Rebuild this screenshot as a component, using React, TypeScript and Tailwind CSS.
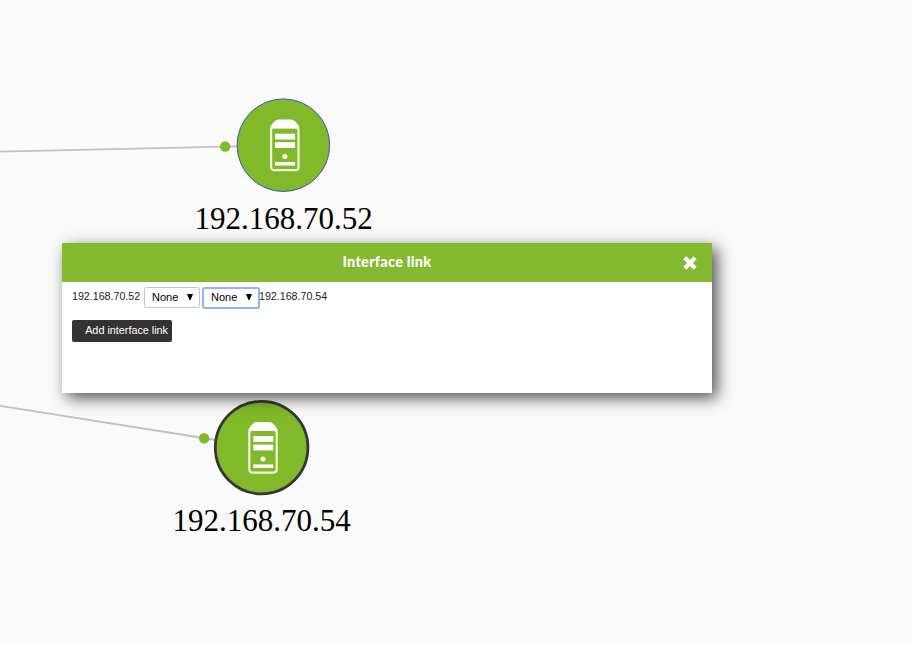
type NodeProps = { cx: number; cy: number; selected?: boolean; label: string; labelX: number };

function ServerNode({ cx, cy, selected, label, labelX }: NodeProps) {
  return (
    <g>
      <circle
        cx={cx}
        cy={cy}
        r={46.3}
        fill="#82b92a"
        stroke={selected ? '#363636' : '#3f52c0'}
        strokeWidth={selected ? 2.8 : 1}
      />
      <g transform={`translate(${cx + 1.4} ${cy})`} fill="#fff">
        <rect x={-13.7} y={-18} width={27.4} height={43} rx={3} fill="none" stroke="#eff6e2" strokeWidth={2.2} />
        <path d="M-14.6 -16.8 C-14.6 -20 -9.5 -25.7 -6.5 -25.7 H6.5 C9.5 -25.7 14.6 -20 14.6 -16.8 Z" />
        <rect x={-9.7} y={-11.5} width={20} height={5.8} />
        <rect x={-9.7} y={-3} width={20} height={5.8} />
        <circle cx={0} cy={11.3} r={2.5} />
        <rect x={-9.7} y={16.8} width={20} height={3.6} />
      </g>
      <text x={labelX} y={cy + 83.6} textAnchor="middle" className="fill-black font-['Liberation_Serif',serif] text-[31px]">
        {label}
      </text>
    </g>
  );
}

function InterfaceSelect({ focused }: { focused?: boolean }) {
  return (
    <button
      className={
        focused
          ? 'ml-[2px] flex h-[22px] w-[58px] items-center justify-between rounded-[3px] border-2 border-[#8fb4f4] bg-white pr-[6px] pl-[7px] text-[11px] text-black'
          : 'ml-[3px] flex h-[21px] w-[56px] items-center justify-between rounded-[3px] border border-[#c4c4c4] bg-white pr-[6px] pl-[7px] text-[11px] text-black'
      }
    >
      <span>None</span>
      <svg width="6" height="7" viewBox="0 0 6 7">
        <path d="M0 0H6L3.5 6H2.5Z" />
      </svg>
    </button>
  );
}

export default function App() {
  return (
    <main className="relative h-[645px] w-[912px] overflow-hidden bg-[#fafafa] font-['Liberation_Sans',sans-serif]">
      <svg className="block" width="912" height="645">
        <g stroke="#c0c0c0" strokeWidth="1.8">
          <line x1="0" y1="151.6" x2="237" y2="146.3" />
          <line x1="0" y1="405.8" x2="216" y2="440" />
        </g>
        <circle cx="225.2" cy="146.5" r="5.2" fill="#82b92a" />
        <circle cx="204.1" cy="438.2" r="5.2" fill="#82b92a" />
        <ServerNode cx={283.4} cy={145.2} label="192.168.70.52" labelX={283.5} />
        <ServerNode cx={261.6} cy={447.6} label="192.168.70.54" labelX={261.7} selected />
      </svg>

      <section className="absolute top-[243px] left-[62px] h-[150px] w-[650px] bg-white shadow-[5px_5px_15px_rgba(0,0,0,0.68)]">
        <header className="relative flex h-[39px] items-center justify-center bg-[#84b930] pb-[2px]">
          <h1 className="font-['Lato',sans-serif] text-[14.5px] font-black tracking-[0.25px] whitespace-nowrap text-white">Interface link</h1>
          <button className="absolute top-[13px] right-[15px]" aria-label="Close">
            <svg className="block" width="14" height="14" viewBox="0 0 14 14" stroke="white" strokeWidth="4.2">
              <path d="M1.8 1.8 L12.2 12.2 M12.2 1.8 L1.8 12.2" />
            </svg>
          </button>
        </header>
        <div className="flex h-[31px] items-center pl-[10px] text-[10.67px] text-[#222]">
          <span className="w-[69px] pb-[3px]">192.168.70.52</span>
          <InterfaceSelect />
          <InterfaceSelect focused />
          <span className="-ml-[1px] pb-[3px]">192.168.70.54</span>
        </div>
        <button className="mt-[7px] ml-[10px] flex h-[22px] w-[100px] items-center justify-end rounded-[2px] bg-[#333] pr-[4px] pb-[2px] text-[10.8px] whitespace-nowrap text-white">
          Add interface link
        </button>
      </section>
    </main>
  );
}
